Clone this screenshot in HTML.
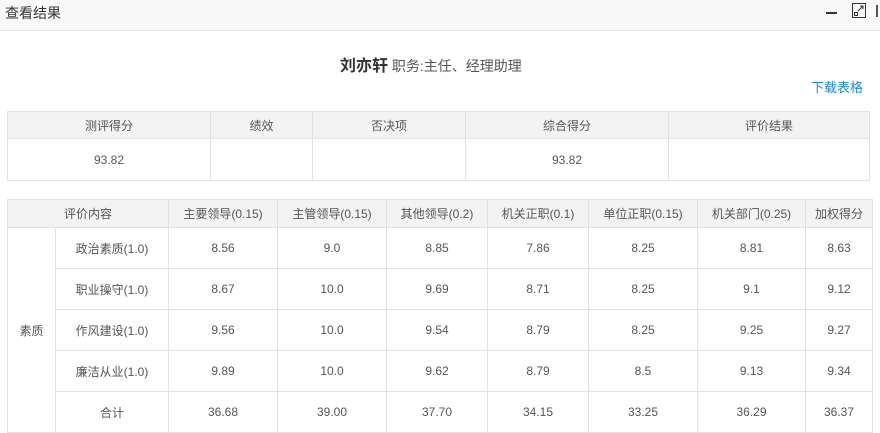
<!DOCTYPE html>
<html><head><meta charset="utf-8"><style>
body{margin:0;width:880px;height:430px;overflow:hidden;background:#fff;font-family:"Liberation Sans","Noto Sans CJK SC",sans-serif;color:#333;position:relative}
.hd{position:absolute;left:0;top:0;width:880px;height:30px;background:#f8f8f8;border-bottom:1px solid #e8e8e8}
.hd span{position:absolute;left:5px;top:3px;font-size:14px;color:#333}
table{position:absolute;border-collapse:collapse;table-layout:fixed;font-size:12px;color:#555}
td{border:1px solid #e2e2e2;text-align:center;padding:0}
tr.h td{background:#f3f3f3}
</style></head><body>
<div class="hd"><span>查看结果</span>
<div style="position:absolute;left:826px;top:12px;width:11px;height:2px;background:#333"></div>
<svg style="position:absolute;left:852px;top:3px" width="14" height="15" viewBox="0 0 14 15"><rect x="0.5" y="0.5" width="13" height="14" fill="none" stroke="#333"/><rect x="2.5" y="9.5" width="3" height="3" fill="#fff" stroke="#333"/><path d="M6 8L11 3M8 3h3v3" fill="none" stroke="#333"/></svg>
<div style="position:absolute;left:876px;top:5px;width:2px;height:12px;background:#555"></div>
</div>
<div style="position:absolute;left:340px;top:52px;font-size:14px;color:#555;white-space:nowrap"><b style="font-size:16px;color:#333">刘亦轩</b> 职务:主任、经理助理</div>
<div style="position:absolute;left:811px;top:77px;font-size:13px;color:#1e88e5">下载表格</div>
<table style="left:7px;top:111px;width:862px">
<colgroup><col style="width:203px"><col style="width:102px"><col style="width:153px"><col style="width:203px"><col style="width:201px"></colgroup>
<tr class="h" style="height:27px"><td>测评得分</td><td>绩效</td><td>否决项</td><td>综合得分</td><td>评价结果</td></tr>
<tr style="height:42px"><td>93.82</td><td></td><td></td><td>93.82</td><td></td></tr>
</table>
<table style="left:7px;top:199px;width:865px">
<colgroup><col style="width:48px"><col style="width:113px"><col style="width:109px"><col style="width:109px"><col style="width:101px"><col style="width:101px"><col style="width:109px"><col style="width:108px"><col style="width:67px"></colgroup>
<tr class="h" style="height:28px"><td colspan="2">评价内容</td><td>主要领导(0.15)</td><td>主管领导(0.15)</td><td>其他领导(0.2)</td><td>机关正职(0.1)</td><td>单位正职(0.15)</td><td>机关部门(0.25)</td><td>加权得分</td></tr>
<tr style="height:41px"><td rowspan="5">素质</td><td>政治素质(1.0)</td><td>8.56</td><td>9.0</td><td>8.85</td><td>7.86</td><td>8.25</td><td>8.81</td><td>8.63</td></tr>
<tr style="height:41px"><td>职业操守(1.0)</td><td>8.67</td><td>10.0</td><td>9.69</td><td>8.71</td><td>8.25</td><td>9.1</td><td>9.12</td></tr>
<tr style="height:41px"><td>作风建设(1.0)</td><td>9.56</td><td>10.0</td><td>9.54</td><td>8.79</td><td>8.25</td><td>9.25</td><td>9.27</td></tr>
<tr style="height:41px"><td>廉洁从业(1.0)</td><td>9.89</td><td>10.0</td><td>9.62</td><td>8.79</td><td>8.5</td><td>9.13</td><td>9.34</td></tr>
<tr style="height:41px"><td>合计</td><td>36.68</td><td>39.00</td><td>37.70</td><td>34.15</td><td>33.25</td><td>36.29</td><td>36.37</td></tr>
</table>
</body></html>
